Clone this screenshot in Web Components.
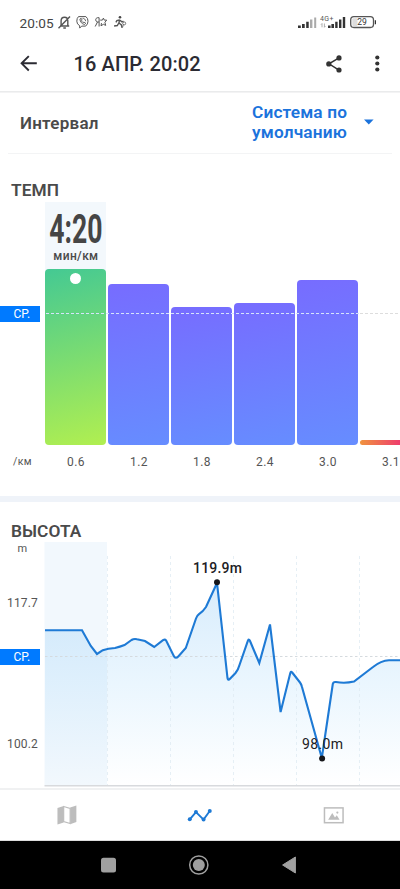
<!DOCTYPE html>
<html lang="ru">
<head>
<meta charset="utf-8">
<title>16 АПР. 20:02</title>
<style>
html,body{margin:0;background:#fff}
body{width:400px;height:889px;overflow:hidden;font-family:Roboto,"Noto Sans",sans-serif;color:#4a4a4a}
</style>
</head>
<body>
<workout-screen></workout-screen>
<script>
const define = (name, html, init) => customElements.define(name, class extends HTMLElement {
  constructor() {
    super();
    const t = document.createElement('template');
    t.innerHTML = html;
    this.attachShadow({mode: 'open'}).append(t.content.cloneNode(true));
  }
  connectedCallback() { if (init) init(this, this.shadowRoot); }
});

define('status-bar', `
<style>
:host{display:flex;height:44px;box-sizing:border-box;padding:14px 23px 0 19.5px;align-items:flex-start;color:#444}
time{font-size:13.6px;line-height:18px;width:37px;letter-spacing:.1px}
svg{display:block}.r{margin-left:auto}
</style>
<time>20:05</time>
<svg width="72" height="17" viewBox="56.5 14 72 17" fill="none" stroke="#555" stroke-width="1.2">
 <path d="M59.5 26h9.2M60.6 25.5v-4.7c0-2 1.3-3.6 3.4-3.6 2 0 3.3 1.6 3.3 3.6v4.7M62.8 28h2.6M58 28.3l11.5-11.8" stroke-width="1.4"/>
 <path d="M78 16.6h7.4q2.1 1.7 2.1 4.6t-2.3 4.9h-4l-2 2v-2.4q-2.9-1.4-2.9-4.5t1.7-4.6z" stroke-width="1"/>
 <path d="M79.4 19c.2 3 2 5 4.7 5.5l1.1-1.3-1.8-1.1-.9.6-1.6-1.8.7-.9-.9-1.7zM82 18.2c1.9.1 3 1.3 3.1 3" stroke-width=".9"/>
 <path d="M98.6 26.5v-8.8h-1.4c-2.6 0-2.7 4.3.1 4.3h1.3M97 22l-2.3 4.5M99.7 20.1h2.2l1-2 .9 2h2.4l-1.8 2.2.8 3.1-2.3-1.1-2.4 1.5.5-2.7" stroke-width="1"/>
 <circle cx="119.5" cy="17.3" r="1.3" fill="#444" stroke="none"/>
 <path d="M119 19.5l-.5 3.5 2.4 2 .7 2.8M118.3 23l-1.5 2.5-3.2.5M119 19.8l-2.6.8-1 1.8M119.6 20.2l1.6 1.6 1.9-.3" stroke-width="1.4"/>
 <circle cx="123.7" cy="23.4" r="1.5" stroke-width=".8"/><path d="M122.8 24.6l-.7 2.8" stroke-width=".8"/>
</svg>
<svg class="r" width="80" height="18" viewBox="297 14 80 18" fill="#333">
 <path d="M298 25.6h2.8V28H298zM302 24h2.7v4H302zM306.2 21.7h2.5V28h-2.5z"/>
 <path d="M310 19.6h2.4V28H310zM314.2 17.4h2V28h-2z" fill="#aaa"/>
 <text x="320" y="21.2" font-size="7" textLength="13.5" fill="#555">4G+</text>
 <path d="M322 23.5v3.8M321 24.6l1-1.1M324.4 23.5v3.8l1-1.1" fill="none" stroke="#999" stroke-width=".8"/>
 <path d="M328 25.6h2.6V28H328zM331.4 24h2.6v4h-2.6zM335.2 21.7h2.4V28h-2.4zM339 19.5h2.4V28H339zM342.8 17h2.4v11h-2.4z"/>
 <rect x="350.7" y="16.7" width="22.8" height="10.8" rx="3.2" fill="#fff" stroke="#555" stroke-width="1.3"/>
 <rect x="352.3" y="18.3" width="5.2" height="7.6" rx="1" fill="#ddd"/>
 <path d="M374.8 20.2h1.2v4h-1.2z"/>
 <text x="357.2" y="25.4" font-size="8.5" textLength="9.6" lengthAdjust="spacingAndGlyphs">29</text>
</svg>`);

define('app-bar', `
<style>
:host{display:flex;height:47px;align-items:center;padding:0 16px 7px 20px;box-sizing:border-box;color:#2b2b33;background:#fff}
h1{margin:0 auto 0 35.5px;font-size:20px;font-weight:500;line-height:24px;white-space:nowrap;letter-spacing:.12px}
svg{display:block}
</style>
<svg width="18" height="18" viewBox="0 0 18 18" fill="none" stroke="#2b2b33" stroke-width="1.9"><path d="M16.8 8.3H2M8.8 1.1L1.6 8.3l7.2 7.2"/></svg>
<h1><slot></slot></h1>
<svg width="58" height="20" viewBox="326 53.5 58 20" fill="#333"><path d="M339 57.3L329 63.3L339 69.6" fill="none" stroke="#333" stroke-width="1.5"/><circle cx="339" cy="57.4" r="2.6"/><circle cx="328.8" cy="63.4" r="2.6"/><circle cx="339" cy="69.5" r="2.6"/><circle cx="377.3" cy="57" r="2.1"/><circle cx="377.3" cy="63" r="2.1"/><circle cx="377.3" cy="69" r="2.1"/></svg>`);

define('interval-picker', `
<style>
:host{display:flex;height:63px;box-sizing:border-box;padding:10px 26px 0 20px;border-top:1px solid #eaebec;box-shadow:inset 0 1px 0 #f3f3f4;background:linear-gradient(#f3f4f5,#f3f4f5) 8px 61px/384px 1px no-repeat}
.l{font-size:17px;font-weight:600;line-height:20px;padding-top:11px;letter-spacing:.25px;white-space:nowrap}
.v{margin-left:auto;color:#1b73dc;width:95px;font-size:17.3px;line-height:20px;font-weight:600;white-space:nowrap;letter-spacing:.13px}
svg{margin:17px 0 0 17px}
</style>
<span class="l"><slot name="label"></slot></span><span class="v"><slot></slot></span>
<svg width="10" height="6" viewBox="0 0 10 6"><path d="M0 .4h9.6L4.8 5.5z" fill="#1b73dc"/></svg>`);

define('average-badge', `
<style>:host{display:block;width:40px;height:16px;box-sizing:border-box;background:#007aff;color:#fff;font-size:12px;line-height:17px;padding-left:13.5px}</style>СР.`);

define('pace-bar', `
<style>
:host{display:flex;flex:0 0 61px;flex-direction:column;justify-content:flex-end;height:243px}
.b{border-radius:4px;background:linear-gradient(168deg,#776cff,#668dff)}
:host([active]){background:linear-gradient(#f3f8fc,#f3f8fc) 0 0/100% 70px no-repeat}
:host([active]) .b{background:linear-gradient(165deg,#44c993,#b1ef50);padding-top:4px;box-sizing:border-box}
:host([slow]) .b{background:linear-gradient(90deg,#f0933f,#ee3e6c 65%);border-radius:3px}
i{display:none;width:11px;height:11px;border-radius:50%;background:#fff;margin:0 auto}
:host([active]) i{display:block}
</style>
<slot></slot><div class="b"><i></i></div>`,
(h, r) => { r.querySelector('.b').style.height = h.getAttribute('height') + 'px'; });

define('pace-value', `
<style>:host{display:block;text-align:center;height:57px}svg{display:block;margin:0 auto;overflow:visible}
span{display:block;font-size:12px;line-height:14px;margin-top:3.5px;letter-spacing:.35px;font-weight:500}</style>
<svg width="61" height="33" viewBox="45 212 61 33"><text transform="translate(49.3 243.4) scale(.64 1)" font-size="41.5" font-weight="700" fill="#454545">4:20</text></svg>
<span>мин/км</span>`);

define('pace-section', `
<style>
:host{display:block;height:348px;box-sizing:border-box;padding-top:26px;border-bottom:6px solid #eff3f9}
h2{margin:0 0 0 11px;font-size:17.3px;font-weight:600;line-height:21px;height:22px;letter-spacing:.05px}
.plot{display:grid;grid-template-columns:45.5px 354.5px;height:243px}
.plot>*{grid-row:1}
average-badge{grid-column:1;margin-top:104px}
.bars{grid-column:2;display:flex;gap:2px;overflow:hidden;margin-left:-.1px}
.avg{grid-column:2;z-index:1;width:354.5px;height:3px;margin-top:110px}
.axis{display:flex;font-size:12px;line-height:16px;padding-top:9px;overflow:hidden;color:#555}
.axis span{flex:0 0 63px;text-align:center;letter-spacing:.4px}
.axis span:first-child{flex-basis:44.5px;text-align:left;padding-left:13px;box-sizing:border-box;font-size:10.5px}
</style>
<h2>ТЕМП</h2>
<div class="plot">
 <average-badge></average-badge>
 <div class="bars">
  <pace-bar active height="176"><pace-value></pace-value></pace-bar>
  <pace-bar height="161"></pace-bar><pace-bar height="138.5"></pace-bar><pace-bar height="142"></pace-bar><pace-bar height="165"></pace-bar><pace-bar slow height="5"></pace-bar>
 </div>
 <svg class="avg" viewBox="0 0 354.5 3"><path d="M0 1.5H313" stroke="#d6e4fb" stroke-dasharray="3 2"/><path d="M314 1.5H355" stroke="#ddd" stroke-dasharray="3 2"/></svg>
</div>
<div class="axis"><span>/км</span><span>0.6</span><span>1.2</span><span>1.8</span><span>2.4</span><span>3.0</span><span>3.1</span></div>`);

const LINE = 'M45 630.3H82L90.8 646L97 654L102.8 650.2Q108 648.6 115 648Q120 646.8 124.5 645L131.5 640Q134 638.4 137 639.2L145 641L154.2 647L163 640.2Q165 639 166 640.4L173.8 656Q175.5 659.5 178.5 656.2L185.8 648L196 618.5Q197 615.7 199 614.2Q203 611.5 206 607L217 583L227.5 678Q228 681 230 678.8L235.5 673Q238.3 669.5 239.5 665L248 640.5Q249 638.6 250 641L259.3 663L270 624.5L280.6 712L290.3 673Q291 670.8 292.2 672.5L300 682.5Q301.5 684.5 302 687L321.8 758L332.8 684Q333.2 681.6 336 682Q345 683.6 354 681.5L373 667Q381 660.5 389 660.2H400';

define('altitude-section', `
<style>
:host{display:flex;flex-direction:column;height:285px;box-sizing:border-box;padding-top:18px}
h2{margin:0 0 0 11px;font-size:17.3px;font-weight:600;line-height:22px;letter-spacing:.05px}
.row{display:flex;height:245px}
.y{flex:0 0 44px;display:flex;flex-direction:column;font-size:12px;line-height:14px;color:#555}
.y span{padding-left:7px;letter-spacing:.15px}.y .u{padding-left:17.5px;font-size:11px;line-height:13px;height:12px}
svg{display:block;flex:none}
</style>
<h2>ВЫСОТА</h2>
<div class="row">
 <div class="y"><span class="u">m</span><span style="margin-top:42px">117.7</span><average-badge style="margin-top:39px"></average-badge><span style="margin-top:72px">100.2</span></div>
 <svg width="356" height="245" viewBox="44 542 356 245">
  <defs><linearGradient id="f" gradientUnits="userSpaceOnUse" x1="0" y1="583" x2="0" y2="785"><stop stop-color="#1b8eea" stop-opacity=".17"/><stop offset=".5" stop-color="#1b9bf5" stop-opacity=".09"/><stop offset="1" stop-color="#1b9bf5" stop-opacity="0"/></linearGradient></defs>
  <path d="M44.5 542H107V785H44.5z" fill="#f2f8fd"/>
  <path d="${LINE}V785H45z" fill="url(#f)"/>
  <path d="M107.5 556V785M170.5 556V785M233.5 556V785M296.5 556V785M359.5 556V785" stroke="#deeaf1" stroke-opacity=".75" stroke-dasharray="3 3"/>
  <path d="M45 656.5H400" stroke="#d5dade" stroke-dasharray="2.5 2.5"/>
  <path d="${LINE}" fill="none" stroke="#1e7ad5" stroke-width="2.1"/>
  <path d="M44.5 785.7H400" stroke="#d8dadd" stroke-width="1.6"/>
  <circle cx="217" cy="582.3" r="3" fill="#16161a"/><circle cx="322.1" cy="758.6" r="3" fill="#16161a"/>
  <g fill="#202024" font-size="14"><text x="193" y="573" textLength="49" font-weight="500">119.9m</text><text x="302" y="749" textLength="41" font-weight="450">98.0m</text></g>
 </svg>
</div>`);

define('tab-bar', `
<style>
:host{display:flex;height:53px;box-sizing:border-box;border-top:2px solid #f0f1f2;border-bottom:1px solid #ddd;justify-content:space-around;align-items:center;padding-top:1px;margin-top:1px}
svg{flex:1;height:30px}
</style>
<svg viewBox="0 0 133 30"><path d="M57.3 7l6.2-2v16.4l-6.2 2zM70 6.5l6.2-2V21l-6.2 2.2z" fill="#bdbdbd"/><path d="M63.5 5.5l6.5 2v15l-6.5-2z" fill="#fff" stroke="#bdbdbd" stroke-width="1.2"/></svg>
<svg viewBox="0 0 133 30"><path d="M56.6 18.3L62.8 11.1L70.4 18.6L76.6 10" fill="none" stroke="#1e7ad5" stroke-width="1.9"/><g fill="#1e7ad5"><circle cx="56.6" cy="18.3" r="2"/><circle cx="62.8" cy="11.1" r="2"/><circle cx="70.4" cy="18.6" r="2"/><circle cx="76.6" cy="10" r="2"/></g></svg>
<svg viewBox="0 0 133 30"><rect x="57.3" y="6.9" width="18.6" height="14.8" fill="none" stroke="#bdbdbd" stroke-width="1.5"/><path d="M61 18.7l4.1-6.6 2.7 4.3 1.8-2.2 2.8 4.5z" fill="#bdbdbd"/><circle cx="70.2" cy="11.6" r="1.1" fill="#bdbdbd"/></svg>`);

define('system-nav', `
<style>:host{display:block;height:48px;background:#000}svg{display:block}</style>
<svg width="400" height="48" viewBox="0 841 400 48"><rect x="101" y="857.8" width="15" height="14.6" rx="2.5" fill="#a0a0a0"/><circle cx="198.8" cy="865" r="9.1" fill="none" stroke="#a0a0a0" stroke-width="1.5"/><circle cx="198.8" cy="865" r="6" fill="#a0a0a0"/><path d="M282.6 865l12.8-8v16z" fill="#a0a0a0" stroke="#a0a0a0" stroke-linejoin="round"/></svg>`);

define('workout-screen', `
<style>:host{display:flex;flex-direction:column;width:400px;height:889px;background:#fff}status-bar,app-bar,interval-picker,pace-section,altitude-section,tab-bar,system-nav{flex:none}</style>
<status-bar></status-bar>
<app-bar>16 АПР. 20:02</app-bar>
<interval-picker><span slot="label">Интервал</span>Система по<br>умолчанию</interval-picker>
<pace-section></pace-section>
<altitude-section></altitude-section>
<tab-bar></tab-bar>
<system-nav></system-nav>`);
</script>
</body>
</html>
